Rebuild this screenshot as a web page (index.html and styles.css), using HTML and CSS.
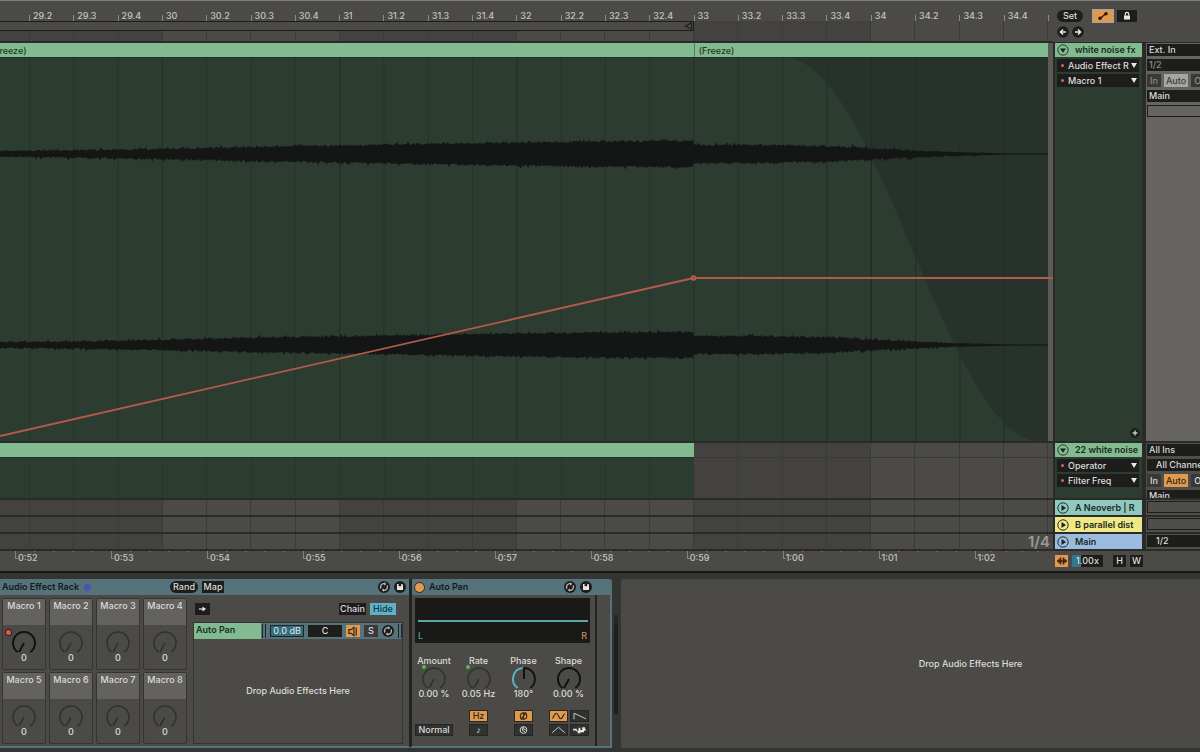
FILE: index.html
```html
<!DOCTYPE html>
<html lang="en">
<head>
<meta charset="utf-8">
<title>Arrangement</title>
<link rel="stylesheet" href="styles.css">
</head>
<body>
<svg class="defs" aria-hidden="true">
  <symbol id="knob" viewBox="0 0 26 24"><path d="M6.7 22A11 11 0 1 1 19.3 22M13 13L8 22"/></symbol>
  <symbol id="play" viewBox="0 0 12 12"><circle cx="6" cy="6" r="5.2" fill="none" stroke="#26322f"/><path d="M4.5 3L9 6L4.5 9z" fill="#1c2422"/></symbol>
  <symbol id="fold" viewBox="0 0 12 12"><circle cx="6" cy="6" r="5.2" fill="none" stroke="#26402f"/><path d="M3 4.5H9L6 8.8z" fill="#18261d"/></symbol>
  <symbol id="swap" viewBox="0 0 12 12"><circle cx="6" cy="6" r="6" fill="#1d1d1c"/><path d="M3 7.6A3.2 3.2 0 0 1 6.4 2.8M9 4.4A3.2 3.2 0 0 1 5.6 9.2" fill="none" stroke="#b9b9b6" stroke-width="1.3"/><path d="M6 1.2L8.4 3L6 4.6zM6 7.4L3.6 9L6 10.8z" fill="#b9b9b6"/></symbol>
  <symbol id="save" viewBox="0 0 12 12"><circle cx="6" cy="6" r="6" fill="#1d1d1c"/><path d="M3 3H8.3L9 3.7V9H3z" fill="#e4e4e1"/><path d="M4.6 3H7.2V5.2H4.6z" fill="#1d1d1c"/></symbol>
</svg>

<main class="arrangement">
  <div class="beats" id="beats"></div>

  <div class="ruler">
    <span></span>
    <span>29.2</span><span>29.3</span><span>29.4</span><span>30</span><span>30.2</span><span>30.3</span><span>30.4</span>
    <span>31</span><span>31.2</span><span>31.3</span><span>31.4</span><span>32</span><span>32.2</span><span>32.3</span><span>32.4</span>
    <span>33</span><span>33.2</span><span>33.3</span><span>33.4</span><span>34</span><span>34.2</span><span>34.3</span><span>34.4</span>
    <span class="edge"></span>
    <div class="loop"><svg viewBox="0 0 9 9"><path d="M8 .8V8.2L1 4.5z" fill="none" stroke="#1d1d1c" stroke-width="1.2"/></svg></div>
  </div>
  <div class="tools">
    <div class="tool-row">
      <button class="pill">Set</button>
      <button class="auto-toggle on" aria-label="Automation mode"><svg viewBox="0 0 20 12"><path d="M7 8.5L13 3.5" stroke="#2a1d10" stroke-width="1.4"/><circle cx="7" cy="8.3" r="1.8" fill="#2a1d10"/><circle cx="13" cy="3.7" r="1.8" fill="#2a1d10"/></svg></button>
      <button class="auto-toggle" aria-label="Lock envelopes"><svg viewBox="0 0 20 12"><path d="M7 5.5H13V9.5H7z" fill="#e8e8e5"/><path d="M8.3 5.5V4A1.7 1.7 0 0 1 11.7 4V5.5" fill="none" stroke="#e8e8e5" stroke-width="1.2"/></svg></button>
    </div>
    <div class="tool-row arrows">
      <button class="round" aria-label="Previous locator"><svg viewBox="0 0 12 12"><circle cx="6" cy="6" r="5.8" fill="#1d1d1c"/><path d="M9 6H4M6 3.6L3.4 6L6 8.4" fill="none" stroke="#e8e8e5" stroke-width="1.4"/></svg></button>
      <button class="round" aria-label="Next locator"><svg viewBox="0 0 12 12"><circle cx="6" cy="6" r="5.8" fill="#1d1d1c"/><path d="M3 6H8M6 3.6L8.6 6L6 8.4" fill="none" stroke="#e8e8e5" stroke-width="1.4"/></svg></button>
    </div>
  </div>

  <section class="lane lane-audio row-1">
    <div class="clip-titles"><span class="clip-title first"><i>(Freeze)</i></span><span class="clip-title second">(Freeze)</span></div>
    <svg class="wave" viewBox="0 0 1048 383" preserveAspectRatio="none">
      <g id="waveGrid"></g>
      <path d="M785 0C878 0 947 383 1040 383H1048V0z" fill="#26322a"/>
      <g id="fadeGrid"></g>
      <path id="waveTop" fill="#131614"/>
      <path id="waveBottom" fill="#131614"/>
      <path d="M0 378L693.500 220H1053" fill="none" stroke="#b55a4b" stroke-width="1.8"/>
      <circle cx="693.500" cy="220" r="2" fill="#8c4a40" stroke="#c8604f" stroke-width="1.300"/>
    </svg>
  </section>
  <section class="track green row-1">
    <h2><svg><use href="#fold"/></svg>white noise fx</h2>
    <label class="choice"><select aria-label="Automation device"><option>Audio Effect R</option></select></label>
    <label class="choice"><select aria-label="Automation control"><option>Macro 1</option></select></label>
    <button class="add" aria-label="Add automation lane"><svg viewBox="0 0 12 12"><circle cx="6" cy="6" r="5" fill="#1d1f1d"/><path d="M6 3.500V8.500M3.500 6H8.500" stroke="#c9cac7" stroke-width="1.400"/></svg></button>
  </section>
  <section class="io io-audio row-1">
    <button class="field">Ext. In</button>
    <button class="field dim">1/2</button>
    <div class="monitor"><button class="dim">In</button><button class="lit">Auto</button><button class="dim">Off</button></div>
    <button class="field">Main</button>
    <div class="slot"></div>
  </section>

  <section class="lane lane-midi row-2"><div class="midi-clip"><div class="midi-grid"></div></div></section>
  <section class="track green row-2">
    <h2><svg><use href="#fold"/></svg>22 white noise</h2>
    <label class="choice"><select aria-label="Automation device"><option>Operator</option></select></label>
    <label class="choice"><select aria-label="Automation control"><option>Filter Freq</option></select></label>
  </section>
  <section class="io row-2">
    <button class="field">All Ins</button>
    <button class="field indent">All Channels</button>
    <div class="monitor"><button>In</button><button class="orange">Auto</button><button>Off</button></div>
    <button class="field">Main</button>
  </section>

  <section class="lane row-3"></section>
  <section class="track aqua row-3"><h2><svg><use href="#play"/></svg>A Neoverb | R</h2></section>
  <section class="io row-3"><div class="slot"></div></section>

  <section class="lane row-4"></section>
  <section class="track yellow row-4"><h2><svg><use href="#play"/></svg>B parallel dist</h2></section>
  <section class="io row-4"><div class="slot"></div></section>

  <section class="lane lane-main row-5"><span>1/4</span></section>
  <section class="track blue row-5"><h2><svg><use href="#play"/></svg>Main</h2></section>
  <section class="io row-5"><button class="field indent">1/2</button></section>

  <div class="clock">
    <span></span><span>0:52</span><span>0:53</span><span>0:54</span><span>0:55</span><span>0:56</span><span>0:57</span><span>0:58</span><span>0:59</span><span>1:00</span><span>1:01</span><span>1:02</span>
  </div>
  <div class="footer">
    <button class="chip orange" aria-label="Scrub"><svg viewBox="0 0 12 12"><path d="M1 6H11M3 4V8M9 4V8" stroke="#3a230f" stroke-width="1.400"/><path d="M4.500 2.500V9.500M7.500 2.500V9.500" stroke="#3a230f" stroke-width="1.600"/></svg></button>
    <button class="chip speed">1.00x</button>
    <button class="chip h">H</button>
    <button class="chip">W</button>
  </div>
</main>

<footer class="devices">
  <section class="device rack">
    <header><h3>Audio Effect Rack</h3>
      <svg class="hand" viewBox="0 0 10 10"><path d="M2 1.500L3.200 1L3.600 3L4 .500H5.200L5.600 3L6.400 .900L7.500 1.200L7.300 4L8.800 3.200L9.600 4L7.600 7.500L5.500 9.500H4L1.500 7L.400 4L1.300 3.500L2.300 4.500z" fill="#4a52b8"/></svg>
      <button class="pill rand">Rand</button><button class="chip map">Map</button>
      <button class="round end" aria-label="Hot-swap"><svg><use href="#swap"/></svg></button><button class="round" aria-label="Save"><svg><use href="#save"/></svg></button>
    </header>
    <div class="rack-body">
      <div class="macros">
        <div class="macro mapped"><b>Macro 1</b><svg><use href="#knob"/></svg><span>0</span></div>
        <div class="macro"><b>Macro 2</b><svg><use href="#knob"/></svg><span>0</span></div>
        <div class="macro"><b>Macro 3</b><svg><use href="#knob"/></svg><span>0</span></div>
        <div class="macro"><b>Macro 4</b><svg><use href="#knob"/></svg><span>0</span></div>
        <div class="macro"><b>Macro 5</b><svg><use href="#knob"/></svg><span>0</span></div>
        <div class="macro"><b>Macro 6</b><svg><use href="#knob"/></svg><span>0</span></div>
        <div class="macro"><b>Macro 7</b><svg><use href="#knob"/></svg><span>0</span></div>
        <div class="macro"><b>Macro 8</b><svg><use href="#knob"/></svg><span>0</span></div>
      </div>
      <div class="chains">
        <div class="chain-tools"><button class="chip arrow" aria-label="Auto select"><svg viewBox="0 0 10 8"><path d="M1 4H6" stroke="#e8e8e5" stroke-width="1.300"/><path d="M5 1.300L9 4L5 6.700z" fill="#e8e8e5"/></svg></button><button class="chip chain">Chain</button><button class="chip hide">Hide</button></div>
        <div class="chain-list">
          <div class="chain-row">
            <b>Auto Pan</b><i class="bars"></i>
            <button class="db">0.0 dB</button><button class="pan">C</button>
            <button class="chip orange" aria-label="Chain activator"><svg viewBox="0 0 12 12"><path d="M1.500 4H4L7 1.500V10.500L4 8H1.500z" fill="none" stroke="#3a230f" stroke-width="1.300"/><path d="M9.500 1.500V10.500" stroke="#3a230f" stroke-width="1.300"/></svg></button>
            <button class="chip solo">S</button>
            <button class="round" aria-label="Hot-swap chain"><svg><use href="#swap"/></svg></button><i class="bars"></i>
          </div>
          <p>Drop Audio Effects Here</p>
        </div>
      </div>
    </div>
  </section>
  <section class="device pan-device">
    <header><button class="power" aria-label="Device activator"></button><h3>Auto Pan</h3>
      <button class="round end" aria-label="Hot-swap"><svg><use href="#swap"/></svg></button><button class="round" aria-label="Save"><svg><use href="#save"/></svg></button></header>
    <div class="scope"><span>L</span><span>R</span></div>
    <div class="params">
      <div class="param led"><b>Amount</b><svg><use href="#knob"/></svg><span>0.00 %</span></div>
      <div class="param led"><b>Rate</b><svg><use href="#knob"/></svg><span>0.05 Hz</span></div>
      <div class="param strong"><b>Phase</b><svg viewBox="0 0 26 24"><path d="M13 2A11 11 0 0 1 19.300 22M13 2V13"/><path class="arc" d="M6.700 22A11 11 0 0 1 11.500 2.100"/></svg><span>180°</span></div>
      <div class="param strong"><b>Shape</b><svg><use href="#knob"/></svg><span>0.00 %</span></div>
    </div>
    <div class="switches">
      <div><button class="chip normal">Normal</button></div>
      <div><button class="chip orange">Hz</button><button class="chip">♪</button></div>
      <div>
        <button class="chip orange" aria-label="Phase mode"><svg viewBox="0 0 18 11"><circle cx="9" cy="5.500" r="3.500" fill="none" stroke="#3a230f" stroke-width="1.300"/><path d="M6 9.500L12 1.500M9 2V9" stroke="#3a230f" stroke-width="1.200"/></svg></button>
        <button class="chip" aria-label="Spin mode"><svg viewBox="0 0 18 11"><circle cx="9" cy="5.500" r="3.700" fill="none" stroke="#d5d5d2" stroke-width="1.100"/><path d="M9 2L7.500 5.500L10.500 7.500M8 3.500L11.500 5.500" fill="none" stroke="#d5d5d2" stroke-width="1.100"/></svg></button>
      </div>
      <div class="shapes">
        <button class="chip orange" aria-label="Sine"><svg viewBox="0 0 18 11"><path d="M2 8C4 8 4 2.500 6.500 2.500S9 8.500 11.500 8.500S14 3 16 3" fill="none" stroke="#3a230f" stroke-width="1.300"/></svg></button>
        <button class="chip" aria-label="Saw"><svg viewBox="0 0 18 11"><path d="M3 9V2.500L16 8.500" fill="none" stroke="#d5d5d2"/></svg></button>
        <button class="chip" aria-label="Triangle"><svg viewBox="0 0 18 11"><path d="M2 8.500L9 2.500L16 8.500" fill="none" stroke="#d5d5d2"/></svg></button>
        <button class="chip" aria-label="Random"><svg viewBox="0 0 18 11"><path d="M2 4H6V6H8V3H10V5.500H12V2.500H15V4.500H16V6H14V8H10V9H7V7H5V6H2z" fill="#e8e8e5"/></svg></button>
      </div>
    </div>
  </section>
  <div class="rack-end"></div>
  <div class="meter"></div>
  <section class="drop">Drop Audio Effects Here</section>
</footer>
<script src="script.js"></script>
</body>
</html>
```
FILE: styles.css
```css
* { box-sizing: border-box; }
:root {
  --panel: #4b4a47;
  --line: #2a2a28;
  --black: #1d1d1c;
  --green: #82bb8f;
  --deep: #2c3c31;
  --orange: #e09a50;
  --steel: #56737b;
  --text: #dcdcd9;
}
body {
  margin: 0;
  min-height: 100vh;
  display: flex;
  flex-direction: column;
  background: #343432;
  color: var(--text);
  font: 500 9px/12px Inter, "Liberation Sans", sans-serif;
  overflow: hidden;
}
button, select { font: inherit; color: inherit; border: 0; margin: 0; padding: 0; background: none; }
h2, h3, p { margin: 0; font: inherit; }
b, i { font-weight: inherit; font-style: normal; }
svg { display: block; }
.defs { position: absolute; width: 0; height: 0; }

/* arrangement */
.arrangement {
  flex: 1;
  display: grid;
  grid-template-columns: minmax(0, 1fr) 93px 54px;
  grid-template-rows: 42px minmax(200px, 1fr) 57px 17px 17px 17px 20px;
  background: var(--panel);
  border-top: 1px solid #7c807c;
  border-bottom: 2px solid #161615;
}
.row-1 { grid-row: 2; }
.row-2 { grid-row: 3; }
.row-3 { grid-row: 4; }
.row-4 { grid-row: 5; }
.row-5 { grid-row: 6; }
.beats {
  grid-area: 1 / 1 / 7 / 2;
  display: flex;
  margin: 20px 5px 0 0;
  border-right: 1px solid #3a3a38;
}
.beats i { flex: 1; border-left: 1px solid #3a3a38; }
.beats i:first-child { flex: 0 0 29px; border-left: 0; }
.beats .shade { background: #434240; }
.ruler {
  grid-area: 1 / 1;
  display: grid;
  grid-template-columns: 29px repeat(23, 1fr) 5px;
  grid-template-rows: 20px 10px 1fr;
  border-bottom: 2px solid var(--line);
  color: #c4c4c1;
}
.ruler span {
  padding: 9px 0 0 4px;
  background: linear-gradient(#8a8a87, #8a8a87) 0 14px / 1px 6px no-repeat;
}
.ruler span:first-child { background: none; }
.loop {
  grid-area: 2 / 1 / 3 / 17;
  display: flex;
  justify-content: flex-end;
  border: solid var(--black);
  border-width: 1px 1px 1px 0;
  background: var(--panel);
}
.loop svg { width: 9px; height: 8px; }

.tools { grid-area: 1 / 2 / 2 / 4; padding: 8px 0 0 4px; border-bottom: 1px solid var(--line); }
.tool-row { display: flex; align-items: center; }
.pill { height: 12px; padding: 0 6px; border-radius: 6px; background: var(--black); }
.tool-row .pill { width: 26px; margin-right: 9px; padding: 0; }
.auto-toggle { width: 20px; height: 12px; background: var(--black); margin-left: 3px; }
.auto-toggle.on { width: 22px; height: 14px; margin-left: 0; border: 1px solid #a5a5a2; background: var(--orange); }
.auto-toggle svg { width: 100%; height: 100%; }
.arrows { gap: 3px; margin-top: 3px; }
.round, .round svg { flex: none; width: 12px; height: 12px; }

.lane { grid-column: 1; border-bottom: 2px solid var(--line); position: relative; min-width: 0; }
.lane-audio { display: flex; flex-direction: column; padding-right: 5px; background: linear-gradient(#5b5a58, #5b5a58) right / 5px 100% no-repeat; min-height: 0; }
.clip-titles { display: flex; flex: none; height: 14px; color: #1f3a28; line-height: 15px; background: var(--green); }
.clip-title { overflow: hidden; white-space: nowrap; }
.first { flex: none; width: 66.2%; display: flex; }
.first i { margin-left: -9px; }
.second { flex: 1; padding-left: 4px; border-left: 1px solid #557d60; }
.wave { flex: 1; height: 0; min-height: 0; width: 100%; background: var(--deep); overflow: visible; border-top: 1px solid #22302a; }
.lane-midi { padding-right: 5px; background: linear-gradient(#3a3a38, #3a3a38) 0 14px / 100% 1px no-repeat; }
.midi-clip { width: 66.2%; height: 100%; background: var(--deep); border-top: 14px solid var(--green); }
.midi-grid { height: 100%; display: flex; border-top: 1px solid #22302a; }
.midi-grid i { flex: 1; border-left: 1px solid #28362c; }
.midi-grid i:first-child { flex: 0 0 29px; border-left: 0; }
.lane-main { text-align: right; padding-right: 3px; color: #9a9a97; font: 600 15px/15px Inter, sans-serif; }

.track { grid-column: 2; border: solid var(--line); border-width: 0 4px 2px 2px; display: flex; flex-direction: column; background: var(--deep); min-height: 0; overflow: hidden; }
.track h2 { display: flex; align-items: center; gap: 6px; flex: none; height: 15px; padding-left: 2px; color: #1c2a22; white-space: nowrap; font-weight: 600; }
.track h2 svg { width: 12px; height: 12px; flex: none; }
.green h2 { background: var(--green); height: 14px; margin-bottom: 2px; }
.aqua h2 { background: #8fc8bf; }
.yellow h2 { background: #efe885; }
.blue h2 { background: #9bbcde; }
.choice { position: relative; display: block; height: 13px; margin: 0 3px 2px 2px; background: var(--black); flex: none; }
.choice::before { content: ""; position: absolute; left: 4px; top: 5px; width: 3px; height: 3px; border-radius: 2px; background: #e0604f; }
.choice::after { content: ""; position: absolute; right: 2px; top: 4px; width: 6px; height: 5px; background: #e8e8e5; clip-path: polygon(0 0, 100% 0, 50% 100%); }
.choice select { appearance: none; display: block; width: 100%; height: 13px; padding-left: 11px; line-height: 13px; }
.add { margin: auto 1px 2px auto; width: 12px; height: 12px; }

.io { grid-column: 3; border-bottom: 2px solid var(--line); display: flex; flex-direction: column; gap: 3px; padding: 1px 0 0 1px; overflow: hidden; white-space: nowrap; background: #4f4e4b; min-height: 0; }
.io-audio { background: #656461; }
.field { flex: none; height: 12px; padding-left: 2px; text-align: left; background: var(--black); }
.indent { padding-left: 9px; }
.dim { color: #8d8d8a; }
.monitor { display: flex; gap: 3px; flex: none; }
.monitor button { flex: none; height: 13px; width: 14px; background: #383836; }
.monitor button:nth-child(2) { width: 24px; }
.monitor button:last-child { width: 20px; }
.monitor .lit { background: #a5a5a2; color: #3b3b39; }
.io .monitor .orange { background: var(--orange); color: #3a230f; }
.slot { flex: none; height: 12px; border: 1px solid var(--black); border-right: 0; }

.clock { grid-area: 7 / 1; display: flex; color: #c4c4c1; min-width: 0; }
.clock span {
  flex: 96;
  padding: 1px 0 0 3px;
  background: linear-gradient(#858582, #858582) 0 0 / 1px 8px no-repeat, linear-gradient(#858582, #858582) 0 7px / 3px 1px no-repeat, linear-gradient(90deg, #858582 1px, transparent 1px) 0 0 / 20% 1px repeat-x;
}
.clock span:first-child { flex: 0 0 15px; background: none; }
.clock span:last-child { flex: 78; }
.footer { grid-area: 7 / 2 / 8 / 4; display: flex; gap: 4px; padding: 4px 0 0 2px; }
.chip { flex: none; height: 12px; background: var(--black); display: grid; place-items: center; line-height: 12px; }
.chip.orange { background: var(--orange); color: #3a230f; }
.footer .chip { width: 13px; }
.footer .chip svg { width: 12px; height: 12px; }
.footer .speed { width: 31px; background: linear-gradient(90deg, #34768a 9px, #1d1d1c 9px); }
.footer .h { margin-left: 6px; }

/* devices */
.devices { flex: none; display: flex; padding: 6px 0 5px; }
.device { background: var(--panel); border-bottom: 2px solid var(--steel); flex: none; }
.device header { display: flex; align-items: center; height: 16px; background: var(--steel); color: #12191b; gap: 4px; padding: 0 3px 0 2px; }
.device header button { color: var(--text); }
.device h3 { font-weight: 600; }
.end { margin-left: auto; }
.rack { width: 409px; }
.hand { width: 9px; height: 9px; }
.rand { margin-left: 74px; width: 28px; padding: 0; }
.map { width: 22px; }
.rack-body { display: flex; gap: 6px; padding: 3px 9px 2px 2px; }
.macros { flex: none; display: grid; grid-template-columns: repeat(4, 44px); gap: 2px 3px; }
.macro { position: relative; height: 72px; border: 1px solid #343432; border-radius: 2px; display: flex; flex-direction: column; align-items: center; }
.macro b { align-self: stretch; height: 26px; background: #63625e; text-align: center; padding-top: 1px; }
.macro svg { width: 26px; height: 24px; margin-top: 5px; fill: none; stroke: #31312f; stroke-width: 1.600; }
.macro span { margin-top: -2px; }
.mapped svg { stroke: #121211; stroke-width: 2; }
.mapped::before { content: ""; position: absolute; left: 2px; top: 30px; width: 5px; height: 5px; border-radius: 3px; border: 1px solid #2a1513; background: #d85a4c; }
.chains { flex: 1; display: flex; flex-direction: column; }
.chain-tools { display: flex; gap: 4px; padding: 5px 7px 7px 2px; }
.arrow { width: 15px; margin-right: auto; }
.arrow svg { width: 9px; height: 8px; }
.chain { width: 27px; }
.chain-tools .hide { width: 26px; background: #5ab3c6; color: #12343c; }
.chain-list { flex: 1; display: flex; flex-direction: column; border: 1px solid #343432; }
.chain-row { display: flex; align-items: center; gap: 4px; height: 16px; background: var(--steel); }
.chain-row b { align-self: stretch; width: 67px; padding: 1px 0 0 2px; color: #17301f; background: var(--green); margin-right: -3px; font-weight: 600; }
.bars { width: 4px; height: 14px; border: solid #1d2628; border-width: 0 1px; }
.db { width: 34px; height: 12px; background: #326d80; border: 1px solid #1c2325; line-height: 10px; }
.pan { width: 34px; height: 12px; background: var(--black); }
.chain-row .chip { width: 14px; }
.chain-row .chip svg { width: 12px; height: 11px; }
.chain-row .solo { background: #3a3a38; }
.chain-list p { flex: 1; display: grid; place-items: center; }
.pan-device { width: 186px; border-left: 3px solid #232322; display: flex; flex-direction: column; }
.power { width: 11px; height: 11px; border-radius: 6px; background: var(--orange); border: 1px solid #31291f; }
.scope { height: 45px; margin: 3px 5px 0 3px; padding: 0 3px 1px; display: flex; justify-content: space-between; align-items: flex-end; background: linear-gradient(#5aa6ab, #5aa6ab) center 22px / 170px 2px no-repeat #191918; color: #52a3a4; }
.scope span:last-child { color: #cf8a4a; }
.params { display: grid; grid-template-columns: 44px repeat(3, 45px); padding-top: 12px; }
.param { position: relative; display: flex; flex-direction: column; align-items: center; white-space: nowrap; }
.param svg { width: 26px; height: 24px; margin-top: -1px; fill: none; stroke: #31312f; stroke-width: 1.600; }
.param span { margin-top: -2px; }
.strong svg { stroke: #121211; stroke-width: 2; }
.param .arc { stroke: #57b3c4; }
.led::before { content: ""; position: absolute; left: 10px; top: 10px; width: 4px; height: 4px; border-radius: 2px; background: #5cb84b; }
.switches { display: grid; grid-template-columns: 44px repeat(3, 45px); margin-top: 10px; }
.switches > div { display: flex; flex-direction: column; align-items: center; justify-content: flex-end; gap: 2px; }
.switches .chip { width: 19px; background: #31312f; border: 1px solid #262625; line-height: 10px; }
.switches .chip.orange { background: var(--orange); }
.switches .chip svg { width: 17px; height: 10px; }
.switches .normal { width: 38px; }
.switches .shapes { display: grid; grid-template-columns: 19px 19px; justify-content: center; gap: 2px; }
.rack-end { flex: none; width: 17px; border: solid var(--steel); border-width: 16px 2px 2px 0; border-radius: 0 3px 0 0; background: linear-gradient(90deg, #232322 2px, var(--panel) 2px); }
.meter { flex: none; width: 4px; margin: 36px 3px 34px 2px; background: #1e1e1d; border-top: 10px solid #262625; }
.drop { flex: 1; display: grid; place-items: center; padding-left: 120px; background: var(--panel); border-radius: 3px 0 0 3px; }
```
FILE: script.js
```js
// Beat columns: bars of four beats, every other bar shaded.
const beats = document.getElementById('beats');
for (let i = 0; i < 24; i++) {
  const cell = document.createElement('i');
  if (Math.floor(i / 4) % 2 === 0) cell.className = 'shade';
  beats.append(cell);
}
const midi = document.querySelector('.midi-grid');
for (let i = 0; i < 16; i++) midi.append(document.createElement('i'));

const svgNS = 'http://www.w3.org/2000/svg';
function gridLines(group, from) {
  for (let i = from; i < 23; i++) {
    const x = 29.5 + i * 1019 / 23;
    const line = document.createElementNS(svgNS, 'path');
    line.setAttribute('d', `M${x} 0V383`);
    line.setAttribute('stroke', '#1c2620');
    line.setAttribute('stroke-opacity', i % 4 === 3 ? '.6' : '.3');
    group.append(line);
  }
}
gridLines(document.getElementById('waveGrid'), 0);
gridLines(document.getElementById('fadeGrid'), 18);

// Noise swell: envelope points are [x, half height].
const envelope = [[0, 2.8], [70, 3.5], [160, 5], [250, 7], [340, 8.5], [430, 10], [520, 11.5], [600, 12.5], [693, 13],
  [694, 9], [760, 9], [830, 7.5], [870, 5.5], [910, 3.5], [950, 2], [1000, 0.7], [1048, 0.5]];
let seed = 7;
function random() {
  seed = (seed * 16807) % 2147483647;
  return seed / 2147483647;
}
function level(x) {
  let k = 1;
  while (k < envelope.length - 1 && envelope[k][0] < x) k++;
  const [x0, y0] = envelope[k - 1], [x1, y1] = envelope[k];
  return y0 + (y1 - y0) * (x - x0) / (x1 - x0);
}
function wave(id, mid) {
  const top = [], bottom = [];
  for (let x = 0; x <= 1048; x++) {
    const a = level(x);
    const rough = Math.min(1, a / 4);
    const jitter = () => a + rough * (2.2 * random() - 1 + (random() > 0.93 ? 2 : 0));
    top.push(`${x} ${(mid - jitter()).toFixed(1)}`);
    bottom.unshift(`${x} ${(mid + jitter()).toFixed(1)}`);
  }
  document.getElementById(id).setAttribute('d', `M${top.join('L')}L${bottom.join('L')}z`);
}
wave('waveTop', 96);
wave('waveBottom', 287);
```
